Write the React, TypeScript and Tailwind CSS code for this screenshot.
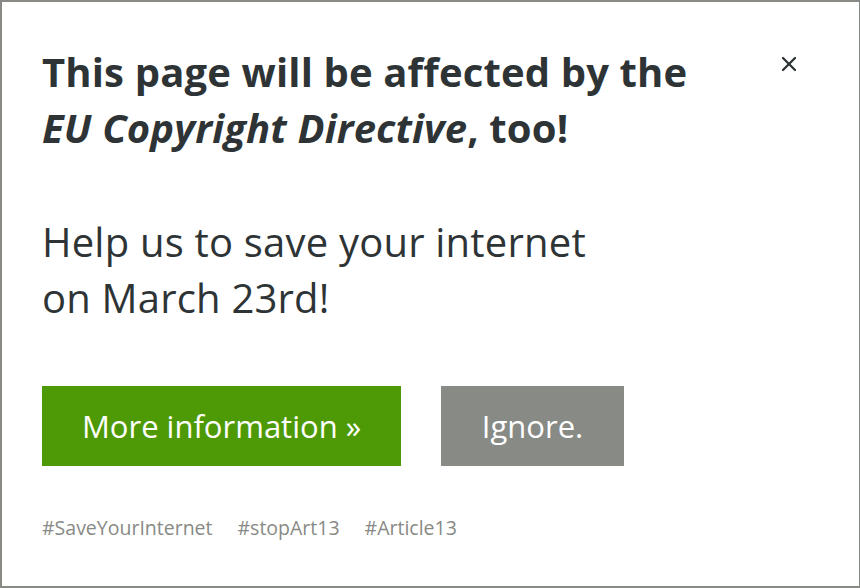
import { X } from 'lucide-react'

export default function App() {
  return (
    <div className="w-[860px] h-[588px] bg-white border-t-2 border-l-2 border-b-2 border-r border-[#888a85] font-['Open_Sans',sans-serif] text-[#2e3436] relative">
      <button className="absolute top-[50px] left-[775px] text-[#2e3436]">
        <X size={24} strokeWidth={2.3} />
      </button>
      <div className="pl-[40px] pt-[42px] pr-[100px]">
        <h1 className="text-[40px] leading-[56px] font-bold tracking-[0.15px] whitespace-nowrap">
          This page will be affected by the
          <br />
          <em>EU Copyright Directive</em>, too!
        </h1>
        <p className="mt-[58px] text-[40px] leading-[56px] tracking-[0.2px] whitespace-nowrap">
          Help us to save your internet
          <br />
          on March 23rd!
        </p>
        <div className="mt-[60px] flex gap-[40px]">
          <a className="w-[359px] h-[80px] bg-[#4e9a06] text-white text-[31px] flex items-center justify-center">
            More information »
          </a>
          <a className="w-[183px] h-[80px] bg-[#888a85] text-white text-[31px] flex items-center justify-center">
            Ignore.
          </a>
        </div>
        <div className="mt-[47px] flex gap-[25px] text-[19.5px] text-[#888a85]">
          <span>#SaveYourInternet</span>
          <span>#stopArt13</span>
          <span>#Article13</span>
        </div>
      </div>
    </div>
  )
}
